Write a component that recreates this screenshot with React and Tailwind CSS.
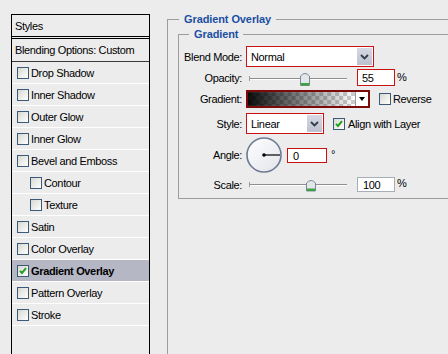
import React from 'react';

const Check = ({ checked }) => (
    <span className="w-[12px] h-[12px] border border-[#3b5a7a] bg-gradient-to-br from-[#d8d8d2] to-white flex items-center justify-center shrink-0">
        {checked && (
            <svg width="8" height="8" viewBox="0 0 8 8">
                <path d="M1 3.8l2 2.2L7 1.2" stroke="#22a022" strokeWidth="2" fill="none" />
            </svg>
        )}
    </span>
);

const DropBtn = () => (
    <span className="w-[15px] m-[1px] bg-gradient-to-b from-[#d6d9e3] to-[#bcc1d0] flex items-center justify-center">
        <svg width="9" height="6" viewBox="0 0 9 6">
            <path d="M1 1l3.5 3.5L8 1" stroke="#333b4d" strokeWidth="1.8" fill="none" />
        </svg>
    </span>
);

// ty = track line, top/bot = thumb extent
const Slider = ({ pos, ty, top, bot }) => (
    <svg width="101" height="17" viewBox="0 0 101 17" className="shrink-0">
        <line x1="3" y1={ty} x2="101" y2={ty} stroke="#8e8e8e" />
        <line x1="3" y1={ty + 1} x2="101" y2={ty + 1} stroke="#ffffff" />
        <line x1="3.5" y1={ty - 2.5} x2="3.5" y2={ty + 2.5} stroke="#9a9a9a" />
        <path
            d={`M${pos - 4.5} ${bot} L${pos - 4.5} ${top + 4} Q${pos} ${top - 1} ${pos + 4.5} ${top + 4} L${pos + 4.5} ${bot} Z`}
            fill="#e4e7ea"
            stroke="#7b8a96"
        />
        <rect x={pos - 4} y={bot - 2.5} width="8" height="2.5" fill="#3aa442" />
    </svg>
);

const items = [
    { name: 'Drop Shadow' },
    { name: 'Inner Shadow' },
    { name: 'Outer Glow' },
    { name: 'Inner Glow' },
    { name: 'Bevel and Emboss' },
    { name: 'Contour', sub: true },
    { name: 'Texture', sub: true },
    { name: 'Satin' },
    { name: 'Color Overlay' },
    { name: 'Gradient Overlay', on: true },
    { name: 'Pattern Overlay' },
    { name: 'Stroke' },
];

const Label = ({ children }) => (
    <span className="w-[64px] shrink-0 text-right pr-[1px] pt-[1px]">{children}</span>
);

const App = () => {
    return (
        <div className="w-[448px] h-[354px] overflow-hidden bg-[#ececec] flex font-['Liberation_Sans',Arial,sans-serif] text-[11px] tracking-[-0.35px] text-black leading-none">
            {/* Styles list */}
            <div className="ml-[11px] mt-[14px] w-[139px] h-[360px] shrink-0 border border-black flex flex-col">
                <div className="h-[24px] flex items-center pl-[3px] pt-[1px] border-b-[3px] border-double border-black">Styles</div>
                <div className="h-[23px] flex items-center pl-[3px] pt-[1px] border-b border-[#3a3a3a]">Blending Options: Custom</div>
                {items.map((it) => (
                    <div
                        key={it.name}
                        className={
                            (it.on ? 'bg-[#b5b7c4] font-bold ' : '') +
                            (it.sub ? 'pl-[18px] ' : 'pl-[5px] ') +
                            'h-[22px] flex items-center gap-[2px] border-b border-white'
                        }
                    >
                        <Check checked={it.on} />
                        <span className="pt-[1px]">{it.name}</span>
                    </div>
                ))}
            </div>

            {/* Settings */}
            <fieldset className="ml-[17px] mt-[12px] w-[300px] h-[400px] shrink-0 border-l border-t border-[#9d9d9d]">
                <legend className="ml-[11px] px-[5px] leading-[14px] font-bold text-[#1b4fa3] tracking-[-0.1px]">Gradient Overlay</legend>
                <fieldset className="ml-[10px] mt-[1px] w-[300px] border-l border-t border-b border-[#9d9d9d] pt-[5px] pb-[6px]">
                    <legend className="ml-[10px] px-[5px] leading-[14px] font-bold text-[#1b4fa3] tracking-[-0.1px]">Gradient</legend>

                    <div className="h-[21px] flex items-center">
                        <Label>Blend Mode:</Label>
                        <div className="ml-[3px] w-[128px] h-[21px] border border-[#cc1111] bg-white flex">
                            <span className="flex-1 flex items-center pl-[4px] pt-[2px]">Normal</span>
                            <DropBtn />
                        </div>
                    </div>

                    <div className="mt-[2px] h-[17px] flex items-center">
                        <Label>Opacity:</Label>
                        <div className="ml-[3px] h-[17px]">
                            <Slider pos={59} ty={9.5} top={3} bot={16.5} />
                        </div>
                        <div className="ml-[10px] w-[38px] h-[17px] border border-[#cc1111] bg-white flex items-center pl-[4px] pt-[2px]">55</div>
                        <span className="ml-[2px] self-start mt-[3px]">%</span>
                    </div>

                    <div className="mt-[4px] h-[18px] flex items-center">
                        <Label>Gradient:</Label>
                        <div className="ml-[3px] w-[124px] h-[18px] border-2 border-[#7c0a0a] flex bg-white">
                            <svg width="108" height="14" viewBox="0 0 108 14" className="border-r border-[#9a9a9a]">
                                <defs>
                                    <pattern id="chk" width="8" height="8" patternUnits="userSpaceOnUse">
                                        <rect width="8" height="8" fill="#ffffff" />
                                        <rect width="4" height="4" fill="#cccccc" />
                                        <rect x="4" y="4" width="4" height="4" fill="#cccccc" />
                                    </pattern>
                                    <linearGradient id="gr" x1="0" x2="1" y1="0" y2="0">
                                        <stop offset="0" stopColor="#000" stopOpacity="0.95" />
                                        <stop offset="1" stopColor="#000" stopOpacity="0" />
                                    </linearGradient>
                                </defs>
                                <rect width="108" height="14" fill="url(#chk)" />
                                <rect width="108" height="14" fill="url(#gr)" />
                            </svg>
                            <span className="flex-1 flex items-center justify-center">
                                <svg width="6" height="4" viewBox="0 0 6 4">
                                    <path d="M0 0h6L3 4z" fill="#000" />
                                </svg>
                            </span>
                        </div>
                        <span className="ml-[9px]"><Check /></span>
                        <span className="ml-[2px] pt-[1px]">Reverse</span>
                    </div>

                    <div className="mt-[5px] h-[21px] flex items-center">
                        <Label>Style:</Label>
                        <div className="ml-[3px] w-[78px] h-[21px] border border-[#cc1111] bg-white flex">
                            <span className="flex-1 flex items-center pl-[4px] pt-[2px]">Linear</span>
                            <DropBtn />
                        </div>
                        <span className="ml-[9px]"><Check checked /></span>
                        <span className="ml-[3px] pt-[1px]">Align with Layer</span>
                    </div>

                    <div className="mt-[3px] h-[36px] flex items-center">
                        <Label>Angle:</Label>
                        <svg width="36" height="36" viewBox="0 0 36 36" className="ml-[3px] shrink-0">
                            <defs>
                                <linearGradient id="dial" x1="0" y1="0" x2="1" y2="1">
                                    <stop offset="0" stopColor="#ffffff" />
                                    <stop offset="1" stopColor="#e2e4ea" />
                                </linearGradient>
                            </defs>
                            <circle cx="18" cy="18" r="17" fill="url(#dial)" stroke="#6c7a93" strokeWidth="1.6" />
                            <line x1="18" y1="18" x2="34" y2="18" stroke="#000" strokeWidth="1.2" />
                            <circle cx="18" cy="18" r="1.8" fill="#000" />
                        </svg>
                        <div className="ml-[5px] w-[40px] h-[15px] border border-[#cc1111] bg-white flex items-center pl-[5px] pt-[2px]">0</div>
                        <span className="ml-[4px] self-start mt-[12px]">°</span>
                    </div>

                    <div className="mt-[4px] h-[15px] flex items-center">
                        <Label>Scale:</Label>
                        <div className="ml-[3px] h-[17px]">
                            <Slider pos={65} ty={8.5} top={3} bot={15} />
                        </div>
                        <div className="ml-[10px] w-[38px] h-[15px] border border-[#a7aeb8] bg-white flex items-center pl-[5px] pt-[2px]">100</div>
                        <span className="ml-[2px] self-start mt-[1px]">%</span>
                    </div>
                </fieldset>
            </fieldset>
        </div>
    );
};

export default App;
